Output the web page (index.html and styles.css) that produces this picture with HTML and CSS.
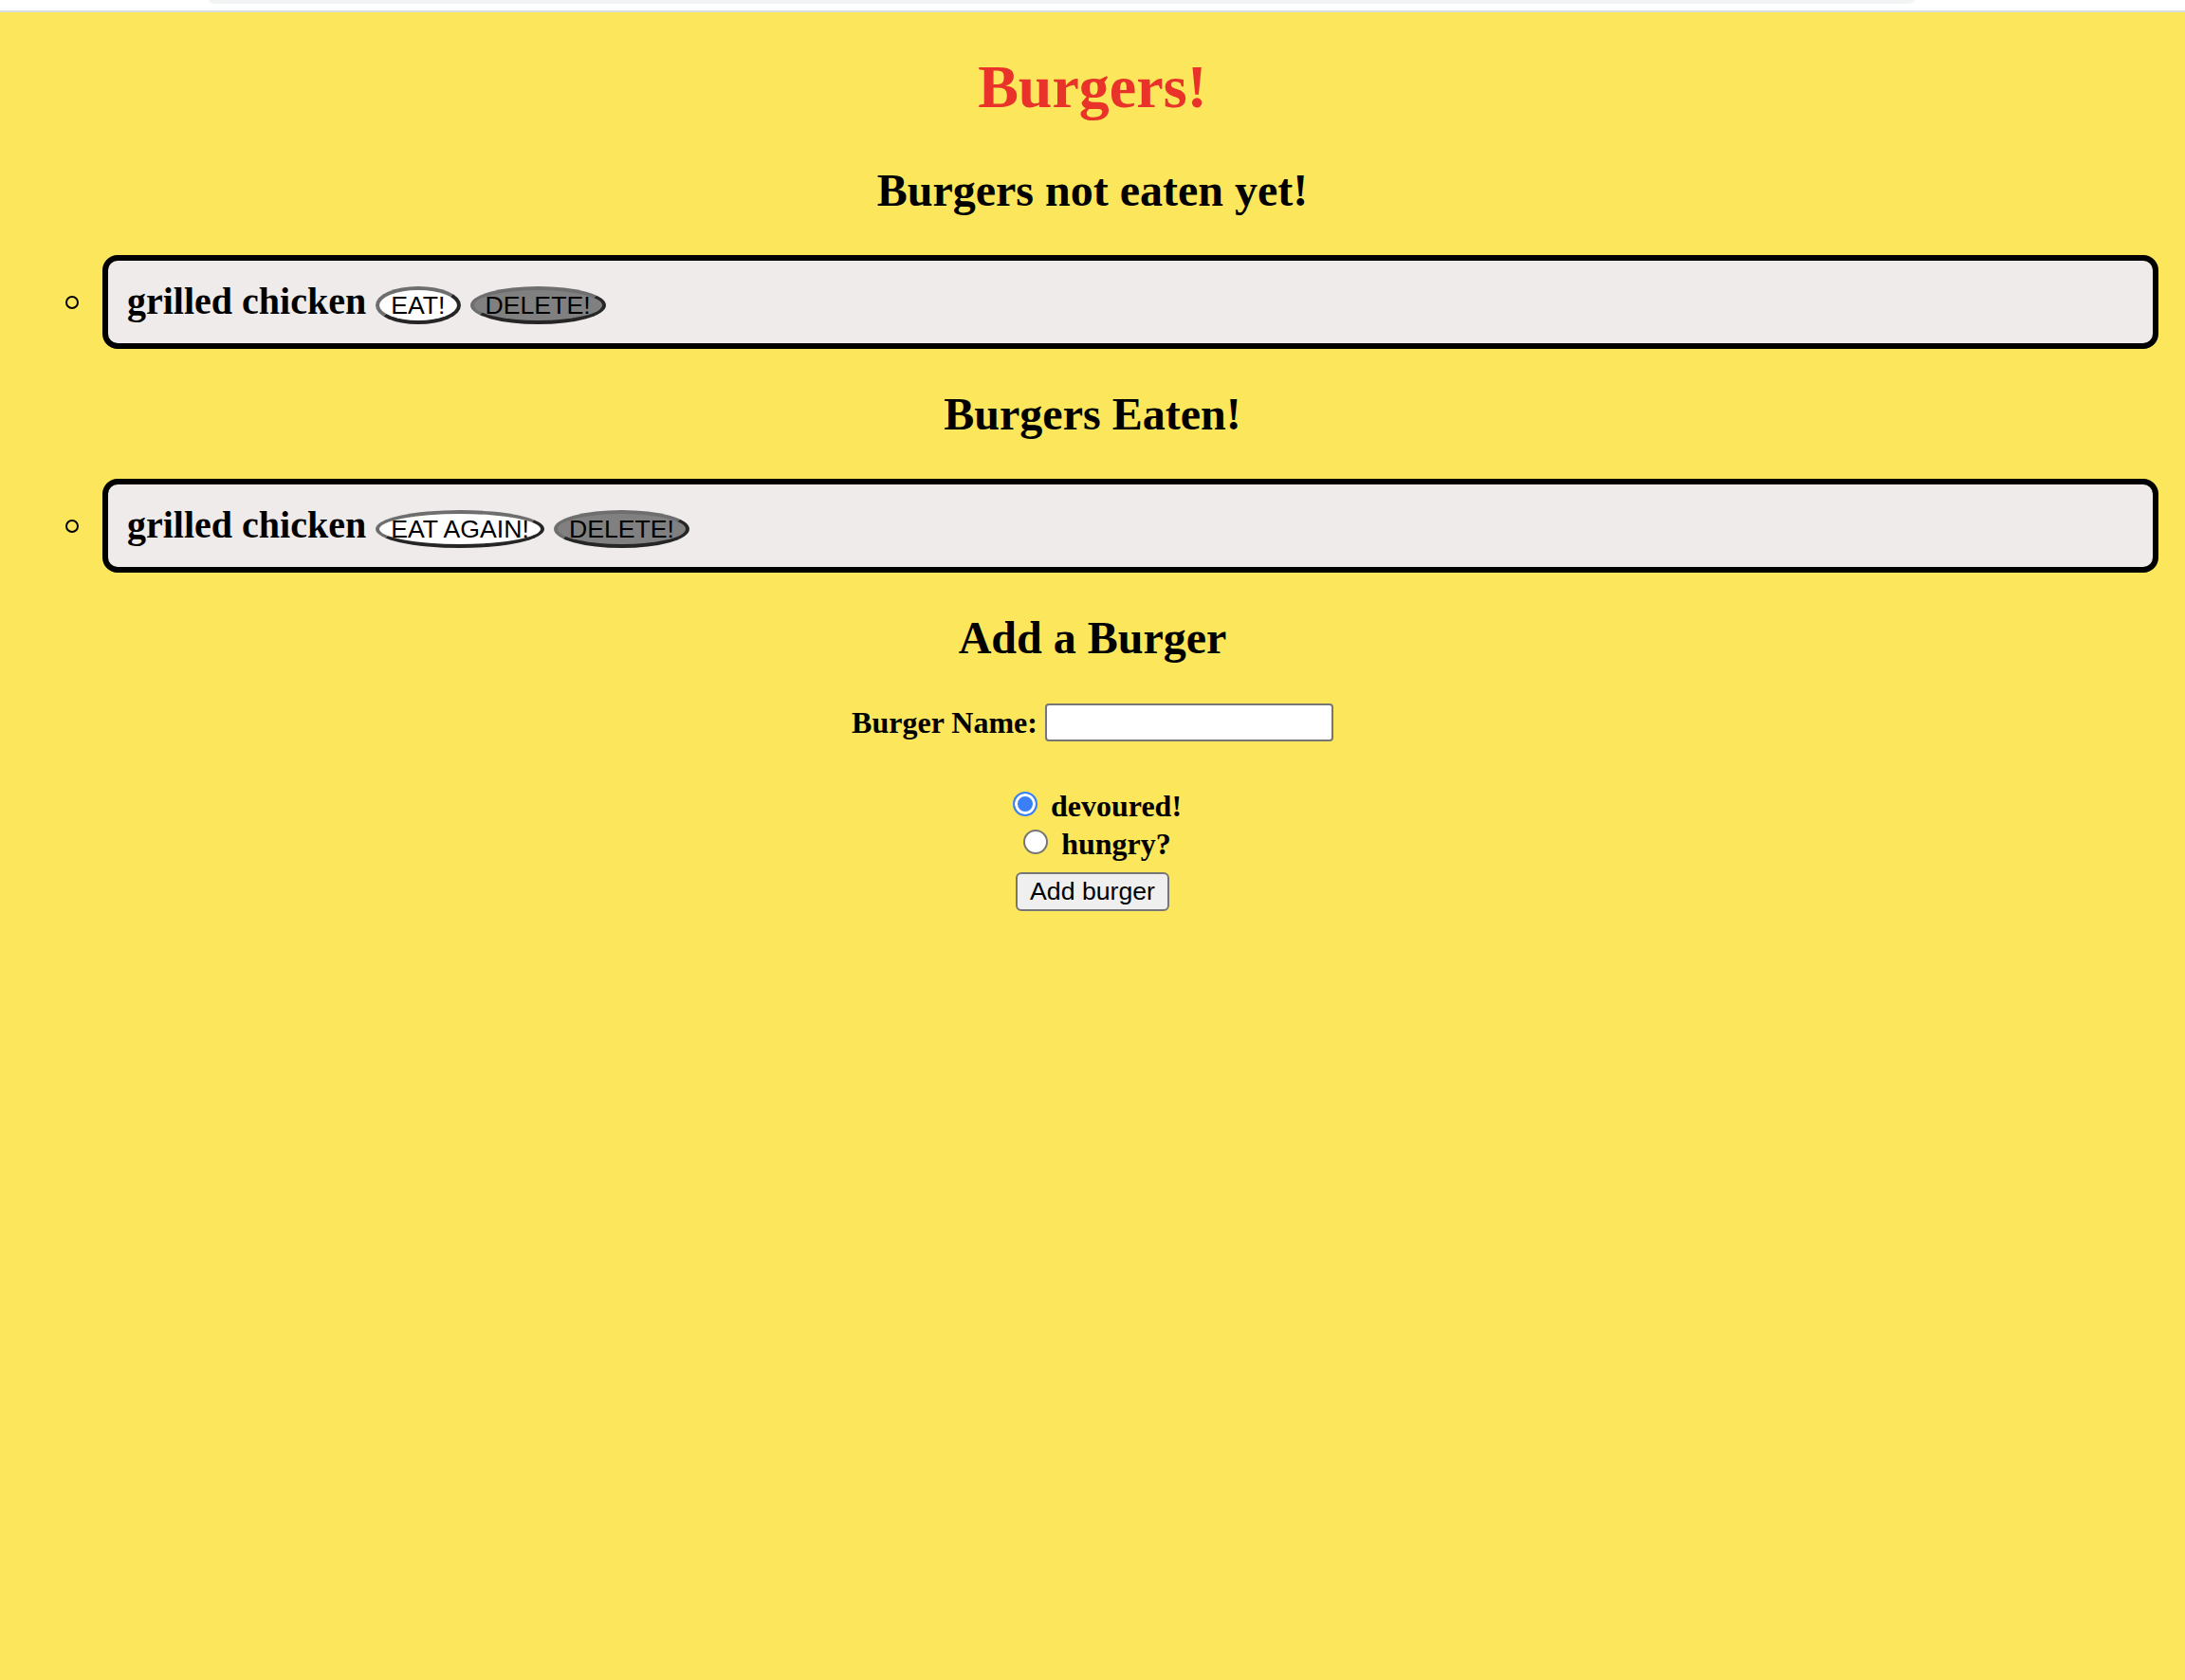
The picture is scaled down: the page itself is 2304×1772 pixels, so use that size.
FILE: index.html
```html
<!DOCTYPE html>
<html lang="en">
<head>
<meta charset="utf-8">
<title>Burgers!</title>
<link rel="stylesheet" href="styles.css">
</head>
<body>
<header class="browser-bar"><div class="browser-tab"></div></header>
<main class="page">
  <h1 class="title">Burgers!</h1>

  <h2 class="section-title">Burgers not eaten yet!</h2>
  <ul class="burger-list">
    <li class="burger-item">
      <div class="burger-card">grilled chicken <button class="pill pill-light" type="button">EAT!</button> <button class="pill pill-dark" type="button">DELETE!</button></div>
    </li>
  </ul>

  <h2 class="section-title">Burgers Eaten!</h2>
  <ul class="burger-list">
    <li class="burger-item">
      <div class="burger-card">grilled chicken <button class="pill pill-light" type="button">EAT AGAIN!</button> <button class="pill pill-dark" type="button">DELETE!</button></div>
    </li>
  </ul>

  <h2 class="section-title">Add a Burger</h2>
  <form class="add-form">
    <div class="form-row name-row">
      <label class="field-label" for="burger-name">Burger Name:</label>
      <input id="burger-name" class="text-input" type="text">
    </div>
    <div class="form-row radio-row radio-first">
      <input id="devoured" class="radio" type="radio" name="state" checked>
      <label class="field-label" for="devoured">devoured!</label>
    </div>
    <div class="form-row radio-row">
      <input id="hungry" class="radio" type="radio" name="state">
      <label class="field-label" for="hungry">hungry?</label>
    </div>
    <div class="form-row submit-row">
      <button class="submit-btn" type="submit">Add burger</button>
    </div>
  </form>
</main>
</body>
</html>
```

FILE: styles.css
```css
html {
  background: #fce65c;
}

body {
  margin: 0;
  min-height: 1772px;
  background: #fce65c;
  font-family: "Liberation Serif", "Times New Roman", serif;
  color: #000;
}

.browser-bar {
  height: 11px;
  background: #ffffff;
  border-bottom: 2px solid #dadce0;
  display: flex;
}

.browser-tab {
  margin-left: 220px;
  width: 1799px;
  height: 4px;
  background: #f1f3f4;
  border-radius: 0 0 8px 8px / 0 0 4px 4px;
}

.page {
  display: block;
}

.title {
  margin: 42px 0 44px;
  font-size: 64px;
  line-height: 74px;
  font-weight: bold;
  text-align: center;
  color: #e8322a;
}

.section-title {
  margin: 41px 0 0;
  font-size: 48px;
  line-height: 55px;
  font-weight: bold;
  text-align: center;
}

.burger-list {
  list-style: none;
  margin: 41px 0 0;
  padding: 0 28px 0 69px;
}

.burger-item {
  display: flex;
  align-items: center;
}

.burger-item::before {
  content: "";
  flex: none;
  width: 10px;
  height: 10px;
  border: 2px solid #000;
  border-radius: 50%;
  margin-right: 25px;
}

.burger-card {
  flex: 1;
  box-sizing: border-box;
  height: 99px;
  background: #f0ebeb;
  border: 6px solid #000;
  border-radius: 16px;
  padding: 19px 20px 0;
  font-size: 40px;
  line-height: 47px;
  font-weight: bold;
  white-space: nowrap;
}

.pill {
  font-family: "Liberation Sans", Arial, sans-serif;
  font-size: 26.67px;
  font-weight: normal;
  line-height: 30px;
  color: #000;
  margin: 0;
  padding: 1px 12px;
  border-width: 4px;
  border-style: solid;
  border-color: #6e6e6e #262626 #262626 #6e6e6e;
  border-radius: 50%;
  vertical-align: baseline;
}

.pill-light {
  background: #ffffff;
}

.pill-dark {
  background: #808080;
}

.add-form {
  display: block;
}

.form-row {
  display: flex;
  justify-content: center;
  align-items: center;
}

.name-row {
  margin-top: 42px;
  height: 40px;
  gap: 8px;
}

.field-label {
  font-size: 32px;
  line-height: 37px;
  font-weight: bold;
}

.text-input {
  box-sizing: border-box;
  width: 304px;
  height: 40px;
  margin: 0;
  border: 2px solid #767676;
  border-radius: 4px;
  background: #fff;
}

.radio-row {
  height: 40px;
}

.radio-first {
  margin-top: 48px;
}

.radio {
  appearance: none;
  -webkit-appearance: none;
  box-sizing: border-box;
  flex: none;
  width: 26px;
  height: 26px;
  margin: 0 14px 5px 10px;
  border: 2px solid #767676;
  border-radius: 50%;
  background: #fff;
}

.radio:checked {
  border-color: #3a7ff6;
  background: #3a7ff6;
  box-shadow: inset 0 0 0 3px #fff;
}

.submit-row {
  margin-top: 10px;
}

.submit-btn {
  font-family: "Liberation Sans", Arial, sans-serif;
  font-size: 26.67px;
  line-height: 31px;
  color: #000;
  margin: 0;
  padding: 3px 13px;
  border: 2px solid #767676;
  border-radius: 6px;
  background: #efefef;
}
```
